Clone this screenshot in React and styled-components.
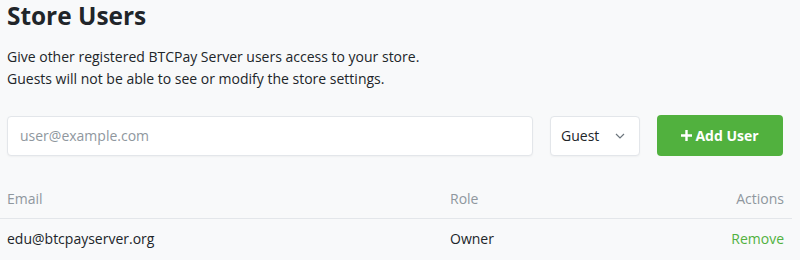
import React from "react"
import styled, { createGlobalStyle } from "styled-components"

const GlobalStyle = createGlobalStyle`
  body {
    margin: 0;
    background: #f8f9fa;
    font-family: "Open Sans", "Noto Sans", sans-serif;
    color: #212529;
  }
`

const Page = styled.div`
  width: 800px;
  height: 260px;
  overflow: hidden;
  padding: 0 17px 0 7px;
  box-sizing: border-box;
`

const Title = styled.h2`
  margin: 0;
  font-size: 24.4px;
  line-height: 31px;
  font-weight: 700;
  color: #212529;
`

const Lead = styled.p`
  margin: 15px 0 0;
  font-size: 14px;
  line-height: 22px;
`

const AddForm = styled.form`
  display: flex;
  align-items: center;
  gap: 17px;
  margin-top: 25px;
`

const EmailInput = styled.input`
  flex: 1;
  height: 40px;
  box-sizing: border-box;
  border: 1px solid #e3e6ea;
  border-radius: 4px;
  background: #fff;
  padding: 0 12px;
  font-family: inherit;
  font-size: 14px;
  color: #212529;
  box-shadow: 0 1px 2px rgba(0, 0, 0, 0.04);
  &::placeholder {
    color: #8f979e;
  }
`

const RoleSelect = styled.div`
  width: 90px;
  height: 40px;
  box-sizing: border-box;
  border: 1px solid #e3e6ea;
  border-radius: 4px;
  background: #fff;
  display: flex;
  align-items: center;
  justify-content: space-between;
  padding: 0 13px 0 10px;
  font-size: 14px;
  box-shadow: 0 1px 2px rgba(0, 0, 0, 0.04);
`

const AddButton = styled.button`
  width: 126px;
  height: 41px;
  border: none;
  border-radius: 4px;
  background: #51b13e;
  color: #fff;
  font-family: inherit;
  font-size: 14px;
  font-weight: 700;
  display: flex;
  align-items: center;
  justify-content: center;
  gap: 3px;
`

const Table = styled.table`
  width: calc(100% + 16px);
  margin: 24px -8px 0 -7px;
  border-collapse: collapse;
  font-size: 14px;
`

const Th = styled.th`
  width: ${p => p.width || "auto"};
  font-weight: 400;
  color: #8f979e;
  text-align: ${p => p.align || "left"};
  padding: 9px 8px 9px 7px;
  line-height: 20px;
  border-bottom: 1px solid #e3e6ea;
`

const Td = styled.td`
  text-align: ${p => p.align || "left"};
  padding: 10px 8px 10px 7px;
  line-height: 20px;
`

const RemoveLink = styled.a`
  color: #51b13e;
  text-decoration: none;
`

const Chevron = () => (
  <svg width="12" height="12" viewBox="0 0 12 12" fill="none">
    <path d="M2 4l4 4 4-4" stroke="#6c757d" strokeWidth="1.2" />
  </svg>
)

const Plus = () => (
  <svg width="11" height="11" viewBox="0 0 11 11">
    <path d="M5.5 0v11M0 5.5h11" stroke="#fff" strokeWidth="2.4" />
  </svg>
)

export default function App() {
  return (
    <>
      <GlobalStyle />
      <Page>
        <Title>Store Users</Title>
        <Lead>
          Give other registered BTCPay Server users access to your store.
          <br />
          Guests will not be able to see or modify the store settings.
        </Lead>
        <AddForm onSubmit={e => e.preventDefault()}>
          <EmailInput placeholder="user@example.com" />
          <RoleSelect>
            Guest
            <Chevron />
          </RoleSelect>
          <AddButton type="submit">
            <Plus />
            Add User
          </AddButton>
        </AddForm>
        <Table>
          <thead>
            <tr>
              <Th width="428px">Email</Th>
              <Th>Role</Th>
              <Th align="right">Actions</Th>
            </tr>
          </thead>
          <tbody>
            <tr>
              <Td>edu@btcpayserver.org</Td>
              <Td>Owner</Td>
              <Td align="right">
                <RemoveLink href="#">Remove</RemoveLink>
              </Td>
            </tr>
          </tbody>
        </Table>
      </Page>
    </>
  )
}
